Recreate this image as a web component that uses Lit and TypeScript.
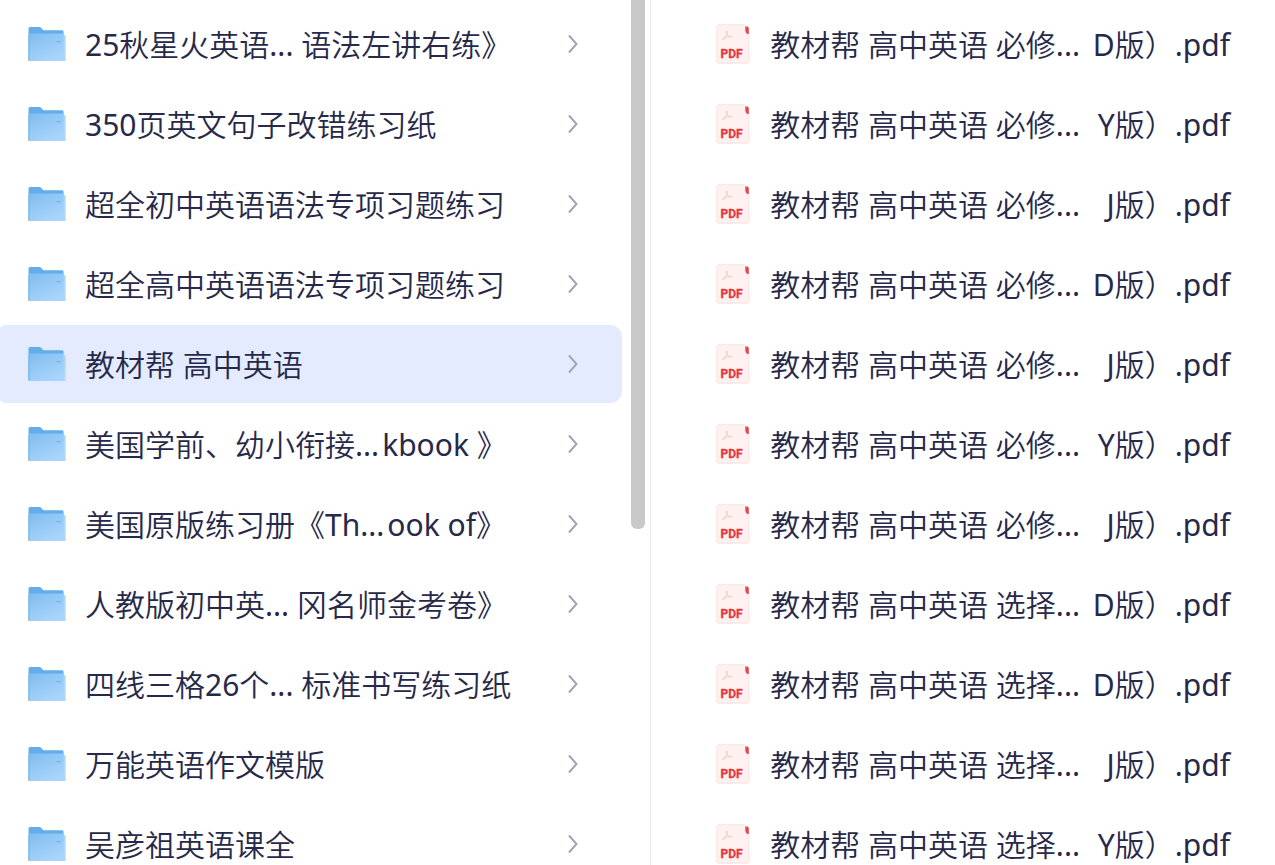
import { LitElement, html, css } from "lit";
import { customElement, property, state } from "lit/decorators.js";

const folders: string[] = [
  "25秋星火英语... 语法左讲右练》",
  "350页英文句子改错练习纸",
  "超全初中英语语法专项习题练习",
  "超全高中英语语法专项习题练习",
  "教材帮 高中英语",
  "美国学前、幼小衔接...\u200akbook 》",
  "美国原版练习册《Th...\u200aook of》",
  "人教版初中英... 冈名师金考卷》",
  "四线三格26个... 标准书写练习纸",
  "万能英语作文模版",
  "吴彦祖英语课全",
];

const files: Array<[string, string]> = [
  ["必修", "D"],
  ["必修", "Y"],
  ["必修", "J"],
  ["必修", "D"],
  ["必修", "J"],
  ["必修", "Y"],
  ["必修", "J"],
  ["选择", "D"],
  ["选择", "D"],
  ["选择", "J"],
  ["选择", "Y"],
];

const TOTAL_FOLDERS = 18;

@customElement("folder-icon")
class FolderIcon extends LitElement {
  static styles = css`
    :host { display: block; flex: none; width: 38px; height: 34px; }
    .art { display: block; width: 100%; height: 100%; }
  `;
  render() {
    return html`<svg class="art" viewBox="0 0 38 34" aria-hidden="true">
      <defs>
        <linearGradient id="front" x1="0" y1="0" x2="0.6" y2="1">
          <stop offset="0" stop-color="#80bdf0" />
          <stop offset="1" stop-color="#a8d5fb" />
        </linearGradient>
      </defs>
      <path d="M0.5 1.5Q0.5 0 2 0H11.5Q12.6 0 13.3 0.9L14.6 2.5Q15.2 3.2 16.2 3.2H34Q35.6 3.2 35.6 4.8V33H0.5Z" fill="#62aee9" />
      <path d="M1 7.5Q1 6.5 2 6.5H35L37.5 9.5V33.2Q37.5 34 36.7 34H1.2Q0.5 34 0.5 33.2Z" fill="url(#front)" />
      <path d="M35.4 6.2L37.5 9.2V33.4H36.2Z" fill="#b5dbfa" opacity=".7" />
      <path d="M28.5 14.8H33" stroke="#6fb0e6" stroke-width="1" />
      <path d="M1 8V33.5" stroke="#72b4eb" stroke-width="1" />
    </svg>`;
  }
}

@customElement("pdf-icon")
class PdfIcon extends LitElement {
  static styles = css`
    :host { display: block; flex: none; width: 34px; height: 40px; }
    .art { display: block; width: 100%; height: 100%; }
    .tag { font: 700 12px "Roboto", sans-serif; fill: #e5383f; stroke: #e5383f; stroke-width: 0.3; }
  `;
  render() {
    return html`<svg class="art" viewBox="0 0 34 40" aria-hidden="true">
      <path d="M3 .8H28.6L33 9V37Q33 39.2 31 39.2H3Q.8 39.2 .8 37V3Q.8 .8 3 .8Z" fill="#fef1f0" stroke="#fae3e2" />
      <path d="M29.3 2.6H31Q32.8 2.6 32.8 4.5V10H31.4Q29.3 8.6 29.3 6.5Z" fill="#e0484e" />
      <path d="M10.5 7.2C12.3 6.2 11.4 10.3 8.8 14.2C7.4 16.4 5.7 16.1 7 14.7C9 12.8 13.8 11.7 15.6 12.6C17.2 13.5 14.2 14.3 12.4 11.8C10.9 9.7 9.9 8 10.5 7.2Z" fill="none" stroke="#f3d0cc" stroke-width="1" />
      <text class="tag" x="15.5" y="33.5" text-anchor="middle">PDF</text>
    </svg>`;
  }
}

@customElement("list-row")
class ListRow extends LitElement {
  @property({ type: Boolean }) selected = false;
  @property({ type: Boolean }) file = false;
  @property() label = "";
  @property() tail = "";

  static styles = css`
    :host { display: block; }
    .row {
      display: flex;
      align-items: center;
      width: 100%;
      height: 78px;
      margin: 0;
      padding: 0 42px 0 33px;
      border: 0;
      border-radius: 12px;
      background: transparent;
      color: #27294a;
      font: 350 30px/40px "Noto Sans", "Noto Sans CJK SC", sans-serif;
      text-align: left;
      white-space: pre;
      cursor: pointer;
    }
    .file { padding: 0 45px 0 65px; }
    .selected { background: #e5ebff; }
    .name, .tail { padding-top: 2px; }
    .name { flex: 1; min-width: 0; padding-left: 19px; }
    .file .name { padding-left: 20px; }
    .latin { font-weight: 400; }
    .chevron { display: block; flex: none; width: 14px; height: 20px; }
  `;

  /* Latin runs are set one weight heavier than the Chinese around them. */
  private mixed(text: string) {
    return text
      .split(/([A-Za-z0-9.]+)/)
      .map((run, i) => (i % 2 ? html`<span class="latin">${run}</span>` : run));
  }

  render() {
    return html`<button
      class="row ${this.selected ? "selected" : ""} ${this.file ? "file" : ""}"
      aria-pressed=${this.selected ? "true" : "false"}
    >${this.file ? html`<pdf-icon></pdf-icon>` : html`<folder-icon></folder-icon>`}<span class="name">${this.mixed(this.label)}</span>${this.file
        ? html`<span class="tail">${this.mixed(this.tail)}</span>`
        : html`<svg class="chevron" viewBox="0 0 14 20" aria-hidden="true">
            <path d="M3 1.5L10.5 10L3 18.5" fill="none" stroke="#a3a5b2" stroke-width="2" />
          </svg>`}</button>`;
  }
}

@customElement("app-root")
class AppRoot extends LitElement {
  @state() private current = 4;

  static styles = css`
    :host {
      display: flex;
      height: 100vh;
      overflow: hidden;
      background: #fff;
    }
    .pane { display: flex; min-width: 0; box-sizing: border-box; overflow: hidden; }
    .folders { flex: 0 0 calc(51% + 1px); border-right: 1px solid #e9e9ec; }
    .files { flex: 1; }
    .list {
      flex: 1;
      min-width: 0;
      display: flex;
      flex-direction: column;
      gap: 2px;
      margin: 0;
      padding: 5px 0 0;
      list-style: none;
    }
    .folders .list { margin: 0 9px 0 -5px; }
    .track { flex: none; width: 14px; margin-right: 5px; }
    .thumb { border-radius: 0 0 6px 6px; background: #c9c9c9; }
  `;

  render() {
    const thumb = (folders.length / TOTAL_FOLDERS) * 100;
    return html`
      <nav class="pane folders">
        <ul class="list">
          ${folders.map(
            (name, i) => html`<li>
              <list-row .label=${name} ?selected=${i === this.current} @click=${() => (this.current = i)}></list-row>
            </li>`
          )}
        </ul>
        <div class="track"><div class="thumb" style="height:${thumb}%"></div></div>
      </nav>
      <main class="pane files">
        <ul class="list">
          ${files.map(
            ([part, edition]) => html`<li>
              <list-row file .label=${`教材帮 高中英语 ${part}...`} .tail=${`${edition}版）.pdf`}></list-row>
            </li>`
          )}
        </ul>
      </main>
    `;
  }
}
